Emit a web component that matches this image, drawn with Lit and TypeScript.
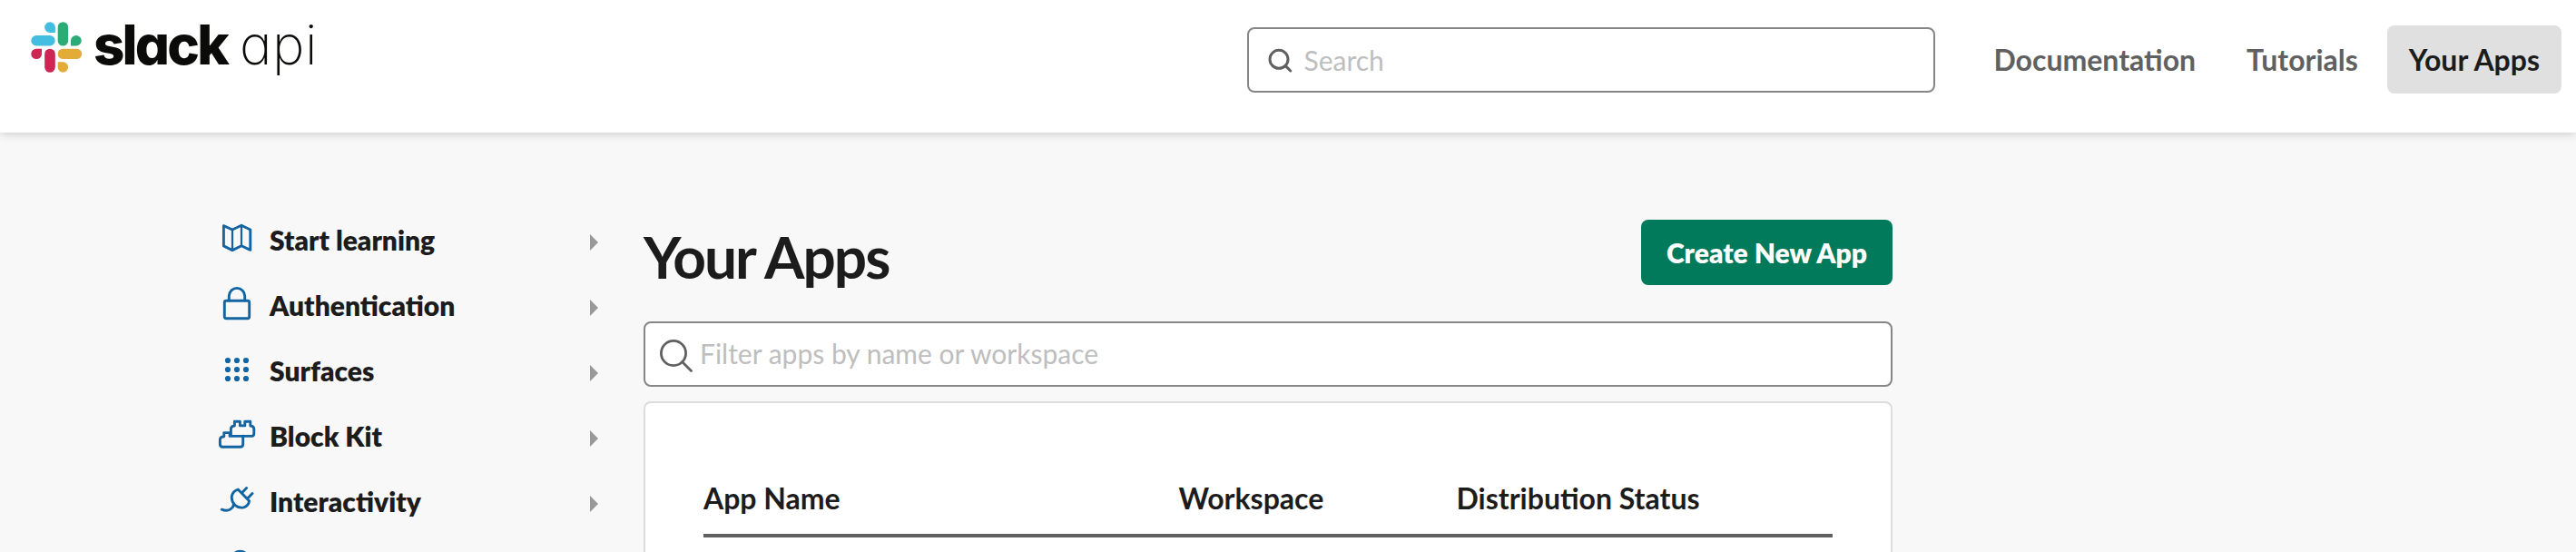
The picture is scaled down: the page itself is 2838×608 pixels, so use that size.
import { LitElement, html, css, svg } from "lit";
import { customElement } from "lit/decorators.js";

const icons = {
  map: svg`<path d="M6.4 18.6 16 23l10-4.7 9.8 4.7v22.4L26 40.8l-10 4.8-9.6-4.7z"/><path stroke-width="2.2" d="M16 23v22.6M26 18.3v22.5"/>`,
  lock: svg`<rect x="7.3" y="29.3" width="27.4" height="19.4" rx="2"/><path d="M12.3 29v-4.9a8.7 8.7 0 0 1 17.4 0V29"/>`,
  dots: svg`${[23, 33, 43].map((y) => [11, 21, 31].map((x) => svg`<circle class="solid" cx=${x} cy=${y} r="3.1"/>`))}`,
  bricks: svg`<path d="M14.4 34.4V26.6q0-3.4 4-3.6v-4.7h6v4.6h5.4v-4.6h6v4.7q4 .2 4 3.6v4.8q0 3-3 3H13.1v-3.8H6.8v4.1q-4.4.3-4.4 3.7v4.9q0 3 3 3h19.3q3 0 3-3v-9"/>`,
  plug: svg`<path d="M4.3 43.2q6.6 2.6 10.7-1.2 2.2-1.8 2.2-4M22.4 21.2 34.6 33.8M22.4 21.2q-5.4 1.6-6.9 6.6-1.2 6.2 3.4 10.6 4 3.6 9.7 2.4 5.2-1.6 6-7M26.6 24.7l5-5.2M33 30.7l5-5.2"/>`,
  circle: svg`<circle cx="24.5" cy="27.3" r="10"/>`,
};

const guides: { label: string; icon: keyof typeof icons }[] = [
  { label: "Start learning", icon: "map" },
  { label: "Authentication", icon: "lock" },
  { label: "Surfaces", icon: "dots" },
  { label: "Block Kit", icon: "bricks" },
  { label: "Interactivity", icon: "plug" },
  { label: "", icon: "circle" },
];

@customElement("api-header")
export class ApiHeader extends LitElement {
  static styles = css`
    :host {
      display: flex;
      box-sizing: border-box;
      height: 146px;
      padding: 0 16px 0 34px;
      background: #fff;
      box-shadow: 0 1px 10px rgba(0, 0, 0, 0.2);
      position: relative;
      align-items: flex-start;
      font-family: Lato, sans-serif;
    }
    .brand {
      display: flex;
      margin-top: 24px;
      color: #0b0b0a;
    }
    .mark {
      width: 56px;
      height: 56px;
      margin-right: 13px;
    }
    .word,
    .suffix {
      font: 800 60px/56px Inter, sans-serif;
      font-feature-settings: "cv11";
      letter-spacing: -2.8px;
      margin-top: -3px;
    }
    .suffix {
      font-weight: 200;
      margin-left: 14px;
      letter-spacing: 0.5px;
    }
    .search {
      display: flex;
      align-items: center;
      box-sizing: border-box;
      width: 758px;
      height: 72px;
      margin: 30px 40px 0 auto;
      padding: 0 21px;
      border: 2px solid #868686;
      border-radius: 8px;
    }
    .search svg {
      width: 28px;
      height: 28px;
      flex: none;
    }
    input {
      flex: 1;
      min-width: 0;
      border: 0;
      padding: 0;
      margin: 0 0 0 11px;
      outline: 0;
      background: none;
      font: 400 30px/40px Lato, sans-serif;
    }
    input::placeholder {
      color: #bebebe;
    }
    nav {
      display: flex;
      gap: 8px;
      margin-top: 28px;
    }
    a {
      padding: 0 24px;
      font-size: 32px;
      font-weight: 700;
      line-height: 76px;
      height: 75px;
      color: #616061;
      border-radius: 8px;
    }
    .current {
      color: #1d1c1d;
      background: #e0e0e0;
    }
  `;

  render() {
    return html`
      <div class="brand">
        <svg class="mark" viewBox="0 0 56 56">
          <path fill="#44bee0" d="M21 .2a5.9 5.9 0 0 1 5.9 5.9V12H21a5.9 5.9 0 0 1 0-11.8zM6 15.1h15a5.7 5.7 0 0 1 0 11.4H6a5.7 5.7 0 0 1 0-11.4z"/>
          <path fill="#2bac76" d="M35.4.2a5.7 5.7 0 0 1 5.7 5.7v15a5.7 5.7 0 0 1-11.4 0v-15a5.7 5.7 0 0 1 5.7-5.7zM44 26.5v-5.7a5.85 5.7 0 1 1 5.85 5.7z"/>
          <path fill="#e3ab37" d="M35.4 29.7h15a5.7 5.7 0 0 1 0 11.4h-15a5.7 5.7 0 0 1 0-11.4zM29.7 44.2h5.7a5.7 5.8 0 1 1-5.7 5.8z"/>
          <path fill="#cd2554" d="M21 29.7a5.8 5.7 0 0 1 5.8 5.7v14.7a5.8 5.7 0 0 1-11.6 0V35.4A5.8 5.7 0 0 1 21 29.7zM12 29.7v5.7a5.85 5.7 0 1 1-5.85-5.7z"/>
        </svg>
        <span class="word">slack</span><span class="suffix">api</span>
      </div>
      <label class="search">
        <svg viewBox="0 0 28 28" fill="none" stroke="#616061" stroke-width="3" stroke-linecap="round">
          <circle cx="12" cy="13.3" r="10"/><path d="m19.3 20.6 5.4 5.4"/>
        </svg>
        <input placeholder="Search" />
      </label>
      <nav><a>Documentation</a><a>Tutorials</a><a class="current">Your Apps</a></nav>
    `;
  }
}

@customElement("api-sidebar")
export class ApiSidebar extends LitElement {
  static styles = css`
    :host {
      display: block;
      width: 419px;
      font-family: Lato, sans-serif;
    }
    .row {
      display: flex;
      align-items: center;
      height: 72px;
    }
    .icon {
      width: 44px;
      height: 72px;
      margin-right: 13px;
      fill: none;
      stroke: #1264a3;
      stroke-width: 2.9;
      stroke-linecap: round;
      stroke-linejoin: round;
    }
    .solid {
      fill: #1264a3;
      stroke: none;
    }
    .label {
      flex: 1;
      font-size: 30px;
      font-weight: 800;
      line-height: 68px;
      height: 72px;
      color: #1d1c1d;
    }
    .caret {
      width: 9px;
      height: 18px;
      margin-top: 2px;
      fill: #999;
    }
  `;

  render() {
    return guides.map(
      (g) => html`
        <div class="row">
          <svg class="icon" viewBox="0 0 44 72">${icons[g.icon]}</svg>
          <span class="label">${g.label}</span>
          <svg class="caret" viewBox="0 0 9 18"><path d="M0 0 9 9 0 18z"/></svg>
        </div>
      `
    );
  }
}

@customElement("apps-panel")
export class AppsPanel extends LitElement {
  static styles = css`
    :host {
      display: block;
      width: 1376px;
      font-family: Lato, sans-serif;
      color: #1d1c1d;
    }
    .top {
      display: flex;
      justify-content: space-between;
      align-items: flex-start;
      height: 112px;
    }
    h1 {
      margin: 3px 0 0;
      font-size: 64px;
      font-weight: 700;
      line-height: 76px;
      letter-spacing: -2px;
    }
    button {
      width: 277px;
      height: 72px;
      padding: 0 0 1px;
      border: 0;
      border-radius: 8px;
      background: #007a5a;
      color: #fff;
      font: 800 30px Lato, sans-serif;
    }
    .filter {
      display: flex;
      align-items: center;
      box-sizing: border-box;
      height: 72px;
      padding: 0 16px;
      border: 2px solid #868686;
      border-radius: 8px;
      background: #fff;
    }
    .filter svg {
      width: 36px;
      height: 36px;
      margin-top: 4px;
      flex: none;
    }
    input {
      flex: 1;
      min-width: 0;
      border: 0;
      padding: 0;
      margin: -2px 0 0 8px;
      outline: 0;
      background: none;
      font: 400 30px/40px Lato, sans-serif;
    }
    input::placeholder {
      color: #bebebe;
    }
    .card {
      box-sizing: border-box;
      height: 300px;
      margin-top: 16px;
      padding: 76px 64px 0;
      border: 2px solid #ddd;
      border-radius: 8px;
      background: #fff;
    }
    .head {
      display: grid;
      grid-template-columns: 523.5px 306px 1fr;
      height: 68px;
      border-bottom: 4px solid #616061;
      font-size: 32px;
      font-weight: 700;
      line-height: 58px;
    }
  `;

  render() {
    return html`
      <div class="top">
        <h1>Your Apps</h1>
        <button>Create New App</button>
      </div>
      <label class="filter">
        <svg viewBox="0 0 36 36" fill="none" stroke="#616061" stroke-width="2.8" stroke-linecap="round">
          <circle cx="15" cy="15" r="13.6"/><path d="m24.5 24.5 10 10"/>
        </svg>
        <input placeholder="Filter apps by name or workspace" />
      </label>
      <div class="card">
        <div class="head"><span>App Name</span><span>Workspace</span><span>Distribution Status</span></div>
      </div>
    `;
  }
}

@customElement("app-root")
export class AppRoot extends LitElement {
  static styles = css`
    :host {
      display: block;
      height: 608px;
      overflow: hidden;
      background: #f8f8f8;
    }
    .body {
      display: flex;
      gap: 50px;
      padding: 0 0 0 240px;
      align-items: flex-start;
    }
    api-sidebar {
      margin-top: 84px;
    }
    apps-panel {
      margin-top: 96px;
    }
  `;

  render() {
    return html`
      <api-header></api-header>
      <div class="body">
        <api-sidebar></api-sidebar>
        <apps-panel></apps-panel>
      </div>
    `;
  }
}
